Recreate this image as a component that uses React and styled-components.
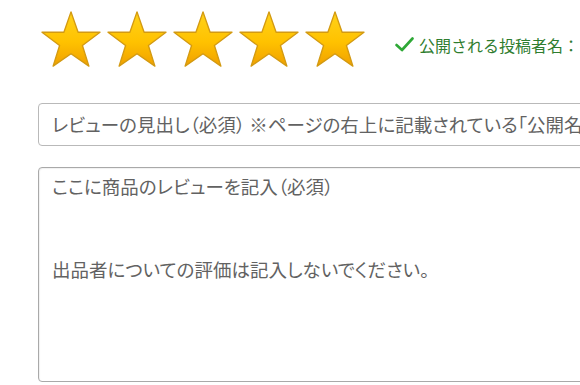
import React from 'react';
import styled, { createGlobalStyle } from 'styled-components';

const GlobalStyle = createGlobalStyle`
    html, body {
        margin: 0;
        padding: 0;
        background: #fff;
        overflow: hidden;
    }
    body {
        font-family: "Noto Sans CJK JP", "Liberation Sans", sans-serif;
    }
`

const Star = () => (
    <StarSvg viewBox="0 0 100 94" width="62" height="58">
        <defs>
            <linearGradient id="starFill" x1="0" y1="0" x2="0" y2="1">
                <stop offset="0%" stopColor="#ffd21a" />
                <stop offset="55%" stopColor="#ffc200" />
                <stop offset="100%" stopColor="#f0a000" />
            </linearGradient>
        </defs>
        <polygon
            points="50,3 61.5,36 97,36 68.5,57.5 79,91 50,71 21,91 31.5,57.5 3,36 38.5,36"
            fill="url(#starFill)"
            stroke="#d39a12"
            strokeWidth="2.2"
            strokeLinejoin="round"
        />
    </StarSvg>
)

const Check = () => (
    <svg width="19" height="15" viewBox="0 0 19 15">
        <path d="M1.5 8 L7 13 L17.5 1.5" fill="none" stroke="#2ea836" strokeWidth="2.6" strokeLinecap="round" strokeLinejoin="round" />
    </svg>
)

const App = () => {
    return (
        <Page>
            <GlobalStyle />
            <Header>
                <Stars>
                    {[0, 1, 2, 3, 4].map(i => <Star key={i} />)}
                </Stars>
                <PublicName>
                    <Check />
                    <span>公開される投稿者名：</span>
                </PublicName>
            </Header>
            <TitleField>
                レビューの見出し（必須） ※ページの右上に記載されている「公開名」が表示されます
            </TitleField>
            <BodyField>
                <Line>ここに商品のレビューを記入（必須）</Line>
                <Line />
                <Line />
                <Line>出品者についての評価は記入しないでください。</Line>
            </BodyField>
        </Page>
    )
}

export default App;

const Page = styled.div`
    width: 580px;
    height: 385px;
    overflow: hidden;
    padding: 10px 0 0 38px;
    box-sizing: border-box;
`

const Header = styled.div`
    display: flex;
    align-items: flex-end;
    height: 58px;
`

const Stars = styled.div`
    display: flex;
    gap: 4px;
    padding-left: 2px;
`

const StarSvg = styled.svg`
    display: block;
`

const PublicName = styled.div`
    display: flex;
    align-items: center;
    gap: 5px;
    margin-left: 29px;
    padding-bottom: 12px;
    font-size: 16px;
    line-height: 22px;
    color: #2f7d2f;
    white-space: nowrap;

    svg {
        margin-top: -2px;
    }
`

const Field = styled.div`
    width: 620px;
    box-sizing: border-box;
    border: 1px solid #b9b9b9;
    border-radius: 4px;
    background: #fff;
    color: #626262;
    font-size: 18.5px;
    font-feature-settings: "palt";
    white-space: nowrap;
    overflow: hidden;
`

const TitleField = styled(Field)`
    margin-top: 35px;
    height: 43px;
    padding: 0 13px;
    line-height: 41px;
`

const BodyField = styled(Field)`
    margin-top: 21px;
    height: 215px;
    padding: 5px 13px;
    border-color: #a9a9a9;
    box-shadow: inset 1px 1px 1px rgba(0, 0, 0, 0.06);
`

const Line = styled.div`
    height: 27.5px;
    line-height: 27.5px;
`
